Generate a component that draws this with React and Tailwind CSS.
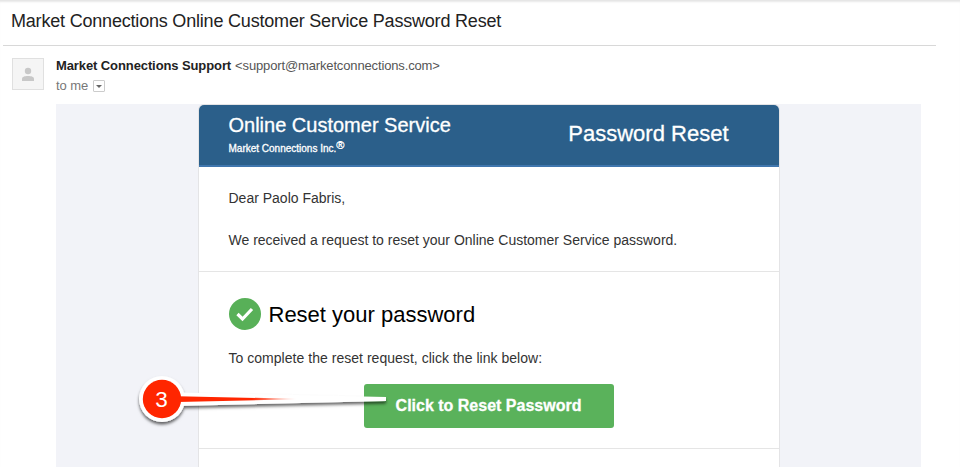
function Callout() {
  return (
    <svg className="absolute left-[130px] top-[369px]" width="265" height="64" viewBox="130 370 265 64">
      <defs>
        <linearGradient id="needle" gradientUnits="userSpaceOnUse" x1="180" y1="0" x2="296" y2="0">
          <stop offset="0.62" stopColor="#ff2600" />
          <stop offset="1" stopColor="#ff2600" stopOpacity="0" />
        </linearGradient>
        <filter id="shadow" filterUnits="userSpaceOnUse" x="130" y="370" width="265" height="64">
          <feDropShadow dx="0" dy="2.5" stdDeviation="1.5" floodColor="#000" floodOpacity="0.6" />
        </filter>
      </defs>
      <g filter="url(#shadow)" fill="#fff">
        <path d="M176 392.500L386 397V401L176 406Z" />
        <circle cx="162" cy="399" r="23" />
      </g>
      <path d="M178 396.300L296 398.700V399.300L178 402Z" fill="url(#needle)" />
      <circle cx="162" cy="399" r="19.200" fill="#ff2600" />
      <text x="161.500" y="406.500" textAnchor="middle" fontSize="22.500" fill="#fff" fontFamily="Liberation Sans, Arial, sans-serif">3</text>
    </svg>
  );
}

export default function App() {
  return (
    <div className="relative flex h-[467px] w-[960px] flex-col overflow-hidden border-t border-[#e6e6e6] bg-white font-['Liberation_Sans',Arial,sans-serif] text-[#222] shadow-[inset_0_2px_2px_-1px_#e8e8e8]">
      <h1 className="ml-[3px] flex h-[45px] w-[933px] items-start border-b border-[#d8d8d8] pl-2 pt-[9px] text-[18px] leading-[22px] tracking-[-0.195px]">
        <span className="whitespace-nowrap">Market Connections Online Customer Service Password Reset</span>
      </h1>
      <header className="flex h-[58px] pl-3 pt-3">
        <div className="flex size-8 shrink-0 items-center justify-center border border-[#e0e0e0] bg-[#f5f5f5]">
          <svg width="12" height="14" viewBox="0 0 12 14" fill="#c8c8c8">
            <circle cx="6" cy="4" r="3.200" />
            <path d="M0 14V12C0 9.800 2.500 9 6 9S12 9.800 12 12V14Z" />
          </svg>
        </div>
        <div className="ml-3 flex flex-col text-[13px] leading-4">
          <div className="flex whitespace-nowrap">
            <strong className="tracking-[-0.1px]">Market Connections Support</strong>
            <span className="ml-1 tracking-[-0.14px] text-[#555]">&lt;support@marketconnections.com&gt;</span>
          </div>
          <div className="mt-1 flex items-center text-[#777]">
            <span className="w-8 whitespace-nowrap tracking-[-0.1px]">to me</span>
            <span className="ml-[5px] flex size-3 items-center justify-center rounded-[1px] border border-[#ccc]">
              <svg width="6" height="3" viewBox="0 0 6 3"><path d="M0 0H6L3 3Z" fill="#666" /></svg>
            </span>
          </div>
        </div>
      </header>
      <main className="ml-14 flex w-[865px] flex-1 justify-center bg-[#f2f3f8]">
        <section className="flex w-[582px] flex-col rounded-t-[6px] border border-b-0 border-[#e4e4e6] bg-white">
          <div className="flex h-[62px] justify-between rounded-t-[5px] border-b-2 border-[#4076ad] bg-[#2b5f8a] pl-[30px] pr-[50px] text-white [-webkit-text-stroke:0.3px_white]">
            <div className="flex flex-col pt-[8px]">
              <h2 className="whitespace-nowrap text-[20px] leading-6">Online Customer Service</h2>
              <p className="whitespace-nowrap text-[10px] leading-[22px]">Market Connections Inc.<span className="relative -top-[3px] text-[11px]">®</span></p>
            </div>
            <h2 className="whitespace-nowrap pt-[16px] text-[22px] leading-[26px]">Password Reset</h2>
          </div>
          <div className="flex h-[105px] flex-col border-b border-[#e5e5e5] pl-[30px] pt-[21px] text-[14px] leading-[21px] text-[#333]">
            <p><span>Dear Paolo Fabris,</span></p>
            <p className="mt-[21px]"><span>We received a request to reset your Online Customer Service password.</span></p>
          </div>
          <div className="flex h-[177px] flex-col border-b border-[#e5e5e5] px-[30px] pt-[26px]">
            <div className="flex h-8 items-center">
              <svg width="32" height="32" viewBox="0 0 32 32">
                <circle cx="16" cy="16" r="16" fill="#58b058" />
                <path d="M8.500 16L13.500 21L23 11" stroke="#fff" strokeWidth="3.200" fill="none" />
              </svg>
              <h3 className="ml-2 whitespace-nowrap pt-0.5 text-[22px] leading-8 text-black">Reset your password</h3>
            </div>
            <p className="mt-[18px] text-[14px] leading-[21px] tracking-[0.03px] text-[#333]">To complete the reset request, click the link below:</p>
            <button className="ml-[135px] mt-[15px] h-11 w-[250px] shrink-0 rounded-[3px] bg-[#5ab25b] text-[16px] font-bold text-white [-webkit-text-stroke:0.3px_white]">Click to Reset Password</button>
          </div>
        </section>
      </main>
      <Callout />
    </div>
  );
}
